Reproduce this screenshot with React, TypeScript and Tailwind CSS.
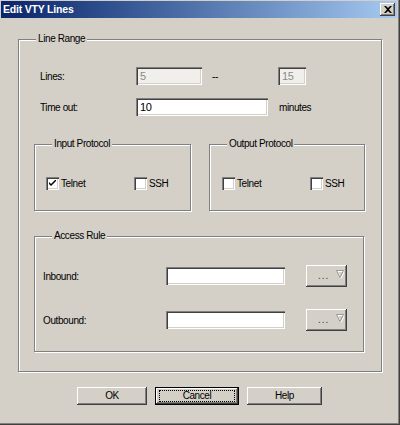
import type { ReactNode } from "react";

const raised =
  "bg-[#d4d0c8] shadow-[inset_-1px_-1px_#404040,inset_1px_1px_#fff,inset_-2px_-2px_#808080,inset_2px_2px_#d4d0c8]";
const sunken =
  "shadow-[inset_1px_1px_#808080,inset_2px_2px_#404040,inset_-1px_-1px_#fff,inset_-2px_-2px_#d4d0c8]";

interface GroupProps {
  label: string
  className?: string
  children?: ReactNode
}

const Group = ({ label, className, children }: GroupProps) => {
  return (
    <div className={"relative border border-[#808080] shadow-[inset_1px_1px_#fff,1px_1px_#fff] " + (className ?? "")}>
      <span className="absolute -top-[8px] left-[17px] bg-[#d4d0c8] px-[2px] leading-[14px]">{label}</span>
      {children}
    </div>
  )
}

const Check = ({ label, checked }: { label: string; checked?: boolean }) => {
  return (
    <div className="flex items-center">
      <div className={"w-[13px] h-[13px] bg-white flex items-center justify-center " + sunken}>
        {checked && (
          <svg width="7" height="7" viewBox="0 0 7 7">
            <path d="M0 2 L0 4 L2 6 L7 1 L7 -1 L2 4 Z" fill="#000" />
          </svg>
        )}
      </div>
      <span className="ml-[2px]">{label}</span>
    </div>
  )
}

const Browse = () => {
  return (
    <div className={"w-[41px] h-[22px] flex items-center pl-[12px] " + raised}>
      <span className="text-[#404040] leading-none tracking-[1px]">...</span>
      <svg width="8" height="8" viewBox="0 0 8 8" className="ml-auto mr-[3px] -mt-[4px]">
        <path d="M0.5 0.5 L7.5 0.5 L4 7.5 Z" fill="none" stroke="#fff" transform="translate(1 1)" />
        <path d="M0.5 0.5 L7.5 0.5 L4 7.5 Z" fill="none" stroke="#9a9892" />
      </svg>
    </div>
  )
}

export default function App() {
  return (
    <div
      className="w-[400px] h-[425px] bg-[#d4d0c8] pt-[1px] pl-[1px] text-[10px] tracking-[-0.4px] text-black shadow-[inset_-1px_-1px_#404040,inset_-2px_-2px_#808080] overflow-hidden"
      style={{ fontFamily: '"Liberation Sans", Arial, sans-serif' }}
    >
      {/* title bar */}
      <div className="h-[17px] w-[396px] bg-gradient-to-r from-[#0a246a] to-[#a6caf0] flex items-center pl-[2px] pr-[2px]">
        <span className="text-white font-bold text-[10.5px] tracking-[-0.2px]">Edit VTY Lines</span>
        <div className={"ml-auto w-[15px] h-[13px] flex items-center justify-center " + raised}>
          <svg width="8" height="7" viewBox="0 0 8 7">
            <path d="M0 0 L2 0 L4 2 L6 0 L8 0 L5 3.5 L8 7 L6 7 L4 5 L2 7 L0 7 L3 3.5 Z" fill="#000" />
          </svg>
        </div>
      </div>

      {/* Line Range */}
      <Group label="Line Range" className="ml-[17px] mt-[21px] w-[364px] h-[333px]">
        <div className="pt-[27px] pl-[15px]">
          <div className="flex items-center h-[18px] pl-[6px]">
            <span className="w-[96px]">Lines:</span>
            <div className={"w-[66px] h-[18px] bg-[#f1efeb] text-[#8a8a8a] text-[11px] pl-[4px] leading-[18px] " + sunken}>5</div>
            <span className="ml-[10px] w-[66px]">--</span>
            <div className={"w-[28px] h-[18px] bg-[#f1efeb] text-[#8a8a8a] text-[11px] pl-[4px] leading-[18px] " + sunken}>15</div>
          </div>
          <div className="flex items-center h-[18px] pl-[6px] mt-[13px]">
            <span className="w-[96px]">Time out:</span>
            <div className={"w-[132px] h-[18px] bg-white text-[11px] pl-[4px] leading-[18px] " + sunken}>10</div>
            <span className="ml-[11px]">minutes</span>
          </div>

          <div className="flex mt-[28px] gap-[18px]">
            <Group label="Input Protocol" className="w-[157px] h-[67px]">
              <div className="flex pt-[31px] pl-[11px]">
                <div className="w-[88px]"><Check label="Telnet" checked /></div>
                <Check label="SSH" />
              </div>
            </Group>
            <Group label="Output Protocol" className="w-[156px] h-[67px]">
              <div className="flex pt-[31px] pl-[12px]">
                <div className="w-[88px]"><Check label="Telnet" /></div>
                <Check label="SSH" />
              </div>
            </Group>
          </div>

          <Group label="Access Rule" className="mt-[25px] w-[330px] h-[116px]">
            <div className="pt-[28px] pl-[8px]">
              <div className="flex items-center h-[22px]">
                <span className="w-[123px]">Inbound:</span>
                <div className={"w-[119px] h-[18px] bg-white " + sunken} />
                <div className="ml-[21px]"><Browse /></div>
              </div>
              <div className="flex items-center h-[22px] mt-[22px]">
                <span className="w-[123px]">Outbound:</span>
                <div className={"w-[119px] h-[18px] bg-white " + sunken} />
                <div className="ml-[21px]"><Browse /></div>
              </div>
            </div>
          </Group>
        </div>
      </Group>

      {/* buttons */}
      <div className="flex gap-[8px] ml-[76px] mt-[15px]">
        <button className={"w-[70px] h-[18px] leading-[18px] text-center " + raised}>OK</button>
        <button className="w-[84px] h-[18px] border border-black p-0 bg-[#d4d0c8]">
          <div className={"w-full h-full relative flex items-center justify-center " + raised}>
            <div className="absolute inset-x-[3px] inset-y-[2px] border border-dotted border-black" />
            <span className="leading-[10px]">Cancel</span>
          </div>
        </button>
        <button className={"w-[75px] h-[18px] leading-[18px] text-center " + raised}>Help</button>
      </div>
    </div>
  )
}
